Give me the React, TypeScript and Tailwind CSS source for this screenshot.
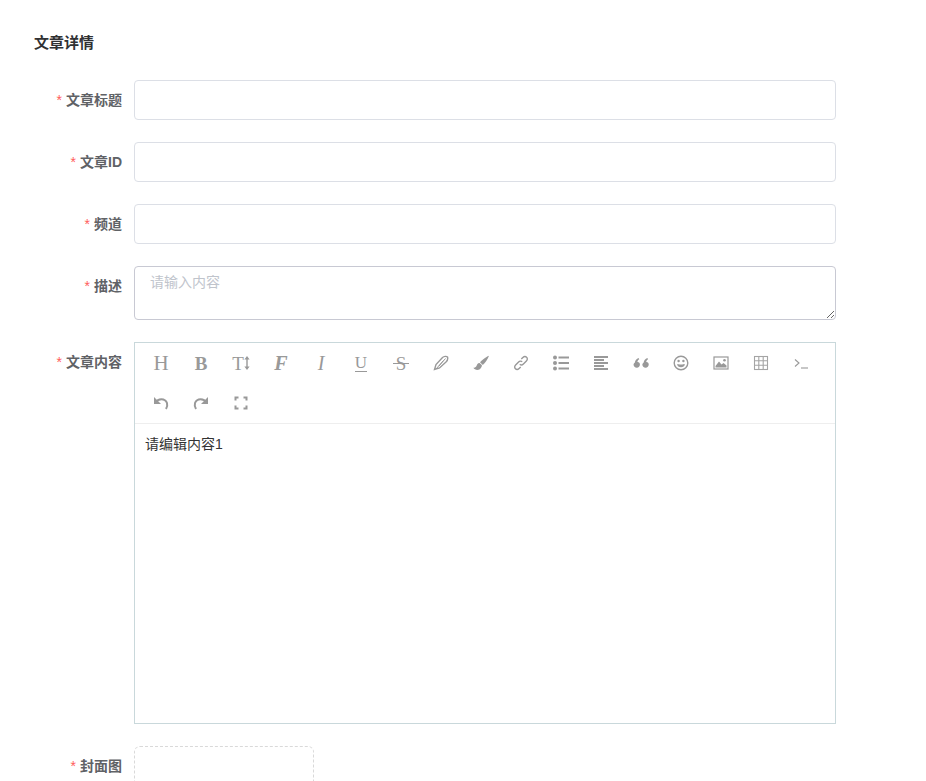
import type { ReactNode } from 'react';

const fontStack = "font-['Liberation_Sans','Noto_Sans_CJK_SC',sans-serif]";

function Letter({ children, className }: { children: ReactNode; className?: string }) {
  return <span className={`font-['Liberation_Serif',serif] leading-none text-[#999] ${className ?? ''}`}>{children}</span>;
}

function Svg({ children }: { children: ReactNode }) {
  return (
    <svg width="16" height="16" viewBox="0 0 16 16" fill="none" stroke="#999" strokeWidth="1.4">
      {children}
    </svg>
  );
}

const row1: ReactNode[] = [
  <Letter className="text-[21px]">H</Letter>,
  <Letter className="text-[19px] font-bold">B</Letter>,
  <span className="flex items-center">
    <Letter className="text-[19px]">T</Letter>
    <svg width="6" height="14" viewBox="0 0 6 14" fill="#999">
      <path d="M3 0 L5.6 3.4 H3.7 V10.6 H5.6 L3 14 L0.4 10.6 H2.3 V3.4 H0.4 Z" />
    </svg>
  </span>,
  <Letter className="text-[20px] font-bold italic">F</Letter>,
  <Letter className="text-[20px] italic">I</Letter>,
  <span className="flex flex-col items-center">
    <Letter className="text-[17px]">U</Letter>
    <span className="h-[1.5px] w-[12px] bg-[#999]" />
  </span>,
  <span className="relative flex items-center justify-center">
    <Letter className="text-[19px]">S</Letter>
    <span className="absolute left-[-3px] right-[-3px] top-[9px] h-[1.5px] bg-[#999]" />
  </span>,
  <Svg>
    <path d="M1.5 14.5 L3 9.5 L9.5 2.5 C11 1.2 13.5 1 14.5 2 C15 3.5 14.5 5.5 13 7 L6.5 13 Z" />
    <path d="M3 14 L10.5 5.5 M6 11 L12.5 3.5" strokeWidth="1" />
  </Svg>,
  <svg width="16" height="16" viewBox="0 0 16 16" fill="#999">
    <path d="M15.5 0.8 C13 2 9.5 4.6 7 7.2 L9.8 10 C12 8 14.8 4 15.8 1.2 Z" />
    <path d="M6.5 8 C4.2 8 4 10.3 3.2 11.6 C2.6 12.6 1.4 12.8 0.4 12.8 C1.6 15 4.6 15.6 6.8 14.2 C8.6 13 9.2 10.6 8.8 10 Z" />
  </svg>,
  <Svg>
    <path d="M6.8 9.2 C7.9 10.3 9.4 10 10.4 9 L13.4 6 C14.6 4.8 14.6 3.2 13.6 2.3 C12.6 1.3 11 1.4 9.9 2.5 L8.3 4.1" />
    <path d="M9.2 6.8 C8.1 5.7 6.6 6 5.6 7 L2.6 10 C1.4 11.2 1.4 12.8 2.4 13.7 C3.4 14.7 5 14.6 6.1 13.5 L7.7 11.9" />
  </Svg>,
  <svg width="16" height="16" viewBox="0 0 16 16" fill="#999">
    <circle cx="2" cy="2.5" r="2" />
    <circle cx="2" cy="8" r="2" />
    <circle cx="2" cy="13.5" r="2" />
    <rect x="5.5" y="1.5" width="10.5" height="2" />
    <rect x="5.5" y="7" width="10.5" height="2" />
    <rect x="5.5" y="12.5" width="10.5" height="2" />
  </svg>,
  <svg width="16" height="16" viewBox="0 0 16 16" fill="#999">
    <rect x="1" y="1" width="14" height="2" />
    <rect x="1" y="4" width="10" height="2" />
    <rect x="1" y="7" width="14" height="2" />
    <rect x="1" y="10" width="10" height="2" />
    <rect x="1" y="13" width="14" height="2" />
  </svg>,
  <svg width="16" height="16" viewBox="2.2 2.6 12 9.6" fill="#999">
    <path d="M3.6 7 C3.8 5.4 4.8 4.3 6.4 3.6 L6.9 4.6 C6 5.2 5.6 5.8 5.5 6.6 C6.7 6.5 7.4 7.4 7.4 8.6 C7.4 10 6.4 11 5.1 11 C3.6 11 2.6 9.9 2.6 8.5 C2.6 8 3 7.5 3.6 7 Z" />
    <path d="M10.2 7 C10.4 5.4 11.4 4.3 13 3.6 L13.5 4.6 C12.6 5.2 12.2 5.8 12.1 6.6 C13.3 6.5 14 7.4 14 8.6 C14 10 13 11 11.7 11 C10.2 11 9.2 9.9 9.2 8.5 C9.2 8 9.6 7.5 10.2 7 Z" />
  </svg>,
  <Svg>
    <circle cx="8" cy="8" r="6.8" strokeWidth="1.4" />
    <circle cx="5.6" cy="6" r="1.2" fill="#999" stroke="none" />
    <circle cx="10.4" cy="6" r="1.2" fill="#999" stroke="none" />
    <path d="M4 9 C5.4 9.6 10.6 9.6 12 9 C11.6 11.2 10 12.3 8 12.3 C6 12.3 4.4 11.2 4 9 Z" fill="#999" stroke="none" />
  </Svg>,
  <Svg>
    <rect x="1" y="2" width="14" height="12" strokeWidth="1.2" />
    <path d="M2.5 12.5 L2.5 11 L6 6.5 L8.5 9.5 L10.5 8 L13.5 10.5 L13.5 12.5 Z" fill="#999" stroke="none" />
    <circle cx="11.5" cy="5.2" r="1.3" fill="#999" stroke="none" />
  </Svg>,
  <svg width="16" height="16" viewBox="0 0 16 16" fill="none" stroke="#a5a5a5" strokeWidth="1.1">
    <rect x="1.5" y="1.5" width="13" height="13" />
    <path d="M1.5 5.8 H14.5 M1.5 10.2 H14.5 M5.8 1.5 V14.5 M10.2 1.5 V14.5" />
  </svg>,
  <svg width="16" height="16" viewBox="0 0 16 16" fill="none" stroke="#999" strokeWidth="1.1">
    <path d="M2 4.5 L6 8 L2 11.5" />
    <path d="M8 13 H15" />
  </svg>,
];

const row2: ReactNode[] = [
  <Svg>
    <path d="M2.5 7.5 C5 3.2 12 2.8 14 8 C14.6 10 14.2 12 13 14" strokeWidth="2" />
    <path d="M1 2 L1 9 L8 9 Z" fill="#999" stroke="none" />
  </Svg>,
  <Svg>
    <path d="M13.5 7.5 C11 3.2 4 2.8 2 8 C1.4 10 1.8 12 3 14" strokeWidth="2" />
    <path d="M15 2 L15 9 L8 9 Z" fill="#999" stroke="none" />
  </Svg>,
  <svg width="16" height="16" viewBox="0 0 16 16" fill="none" stroke="#999" strokeWidth="2">
    <path d="M2.5 5.5 V2.5 H5.5 M10.5 2.5 H13.5 V5.5 M13.5 10.5 V13.5 H10.5 M5.5 13.5 H2.5 V10.5" />
  </svg>,
];

function ToolButton({ icon }: { icon: ReactNode }) {
  return <div className="flex h-10 w-10 items-center justify-center">{icon}</div>;
}

function FormRow({ label, children }: { label: string; children: ReactNode }) {
  return (
    <div className="flex">
      <label className="w-[122px] shrink-0 text-right text-sm leading-10 font-bold text-[#606266]">
        <span className="mr-1 font-normal text-[#ff5c5c]">*</span>
        {label}
      </label>
      <div className="ml-3 w-[702px]">{children}</div>
    </div>
  );
}

function TextInput() {
  return <input className="block h-10 w-full rounded border border-[#dcdfe6] bg-white px-[15px] text-sm outline-none" />;
}

export default function App() {
  return (
    <div className={`h-[781px] overflow-hidden bg-white pt-[33px] ${fontStack}`}>
      <h2 className="ml-[34px] text-[15px] leading-5 font-bold text-[#303133]">文章详情</h2>
      <div className="mt-[27px] flex flex-col gap-[22px]">
        <FormRow label="文章标题">
          <TextInput />
        </FormRow>
        <FormRow label="文章ID">
          <TextInput />
        </FormRow>
        <FormRow label="频道">
          <TextInput />
        </FormRow>
        <FormRow label="描述">
          <textarea
            placeholder="请输入内容"
            className="block h-[54px] w-full rounded border border-[#c8c9d3] bg-white pl-[15px] pr-[15px] py-[5px] text-sm leading-[21px] text-[#606266] outline-none placeholder:text-[#c0c4cc]"
          />
        </FormRow>
        <FormRow label="文章内容">
          <div className="h-[382px] border border-[#c9d8db] bg-white">
            <div className="flex flex-wrap border-b border-[#eeeeee] pl-[6px]">
              {row1.map((icon, i) => (
                <ToolButton key={i} icon={icon} />
              ))}
              {row2.map((icon, i) => (
                <ToolButton key={i} icon={icon} />
              ))}
            </div>
            <p className="mt-2.5 px-2.5 text-sm leading-5 text-[#333]">请编辑内容1</p>
          </div>
        </FormRow>
        <FormRow label="封面图">
          <div className="h-[178px] w-[180px] rounded-md border border-dashed border-[#d9d9d9] bg-white" />
        </FormRow>
      </div>
    </div>
  );
}
